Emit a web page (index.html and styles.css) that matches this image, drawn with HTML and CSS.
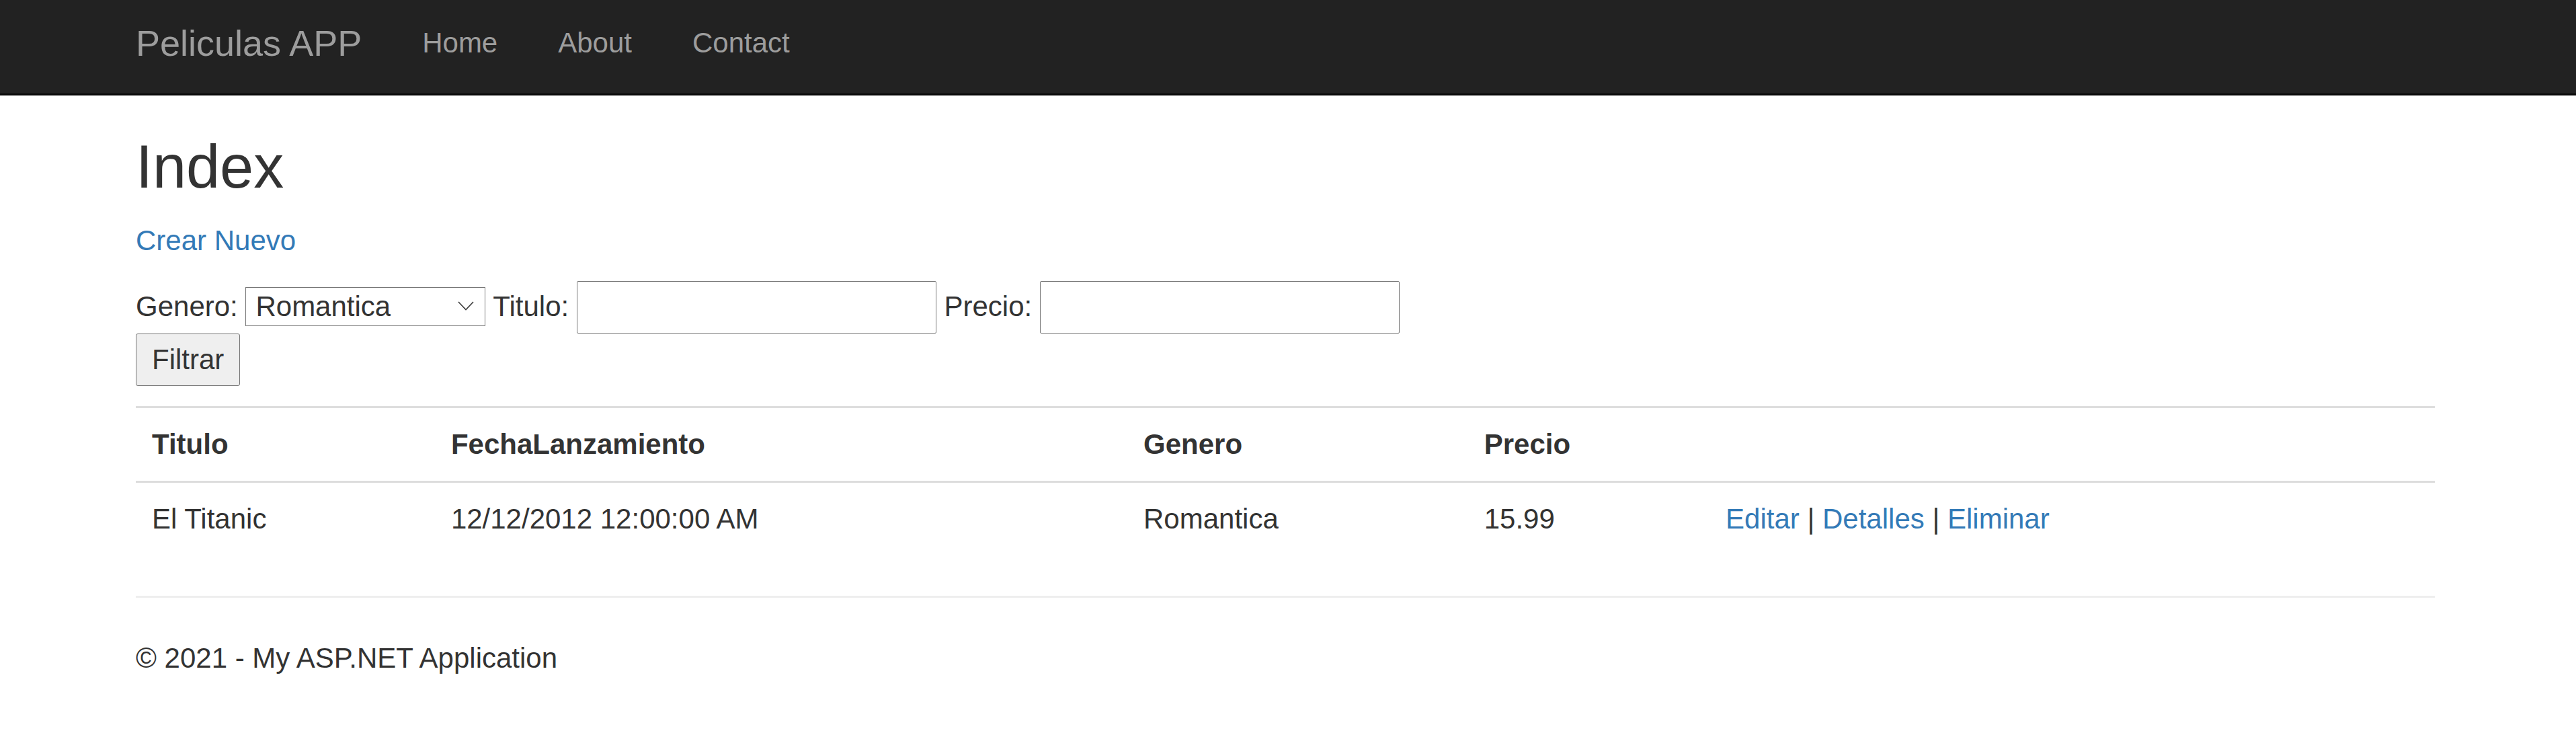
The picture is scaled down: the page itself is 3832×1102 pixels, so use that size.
FILE: index.html
```html
<!DOCTYPE html>
<html lang="es">
<head>
<meta charset="utf-8">
<title>Index - Peliculas APP</title>
<link rel="stylesheet" href="styles.css">
</head>
<body>
<header class="navbar">
  <div class="container nav-inner">
    <a class="brand" href="#">Peliculas APP</a>
    <ul class="nav">
      <li><a href="#">Home</a></li>
      <li><a href="#">About</a></li>
      <li><a href="#">Contact</a></li>
    </ul>
  </div>
</header>
<main class="container body-content">
  <h2 class="title">Index</h2>
  <p class="create"><a href="#">Crear Nuevo</a></p>
  <form class="filter">
    Genero: <span class="select-wrap"><select class="select"><option>Romantica</option><option>Accion</option><option>Comedia</option></select><svg class="chevron" width="24" height="14" viewBox="0 0 24 14"><path d="M1 1 L12 12.5 L23 1" fill="none" stroke="#3a3a3a" stroke-width="1.6"/></svg></span> Titulo: <input class="text-input" type="text"> Precio: <input class="text-input" type="text"><br>
    <button class="btn" type="submit">Filtrar</button>
  </form>
  <table class="table">
    <tbody>
      <tr>
        <th>Titulo</th>
        <th>FechaLanzamiento</th>
        <th>Genero</th>
        <th>Precio</th>
        <th></th>
      </tr>
      <tr>
        <td>El Titanic</td>
        <td>12/12/2012 12:00:00 AM</td>
        <td>Romantica</td>
        <td>15.99</td>
        <td><a href="#">Editar</a> | <a href="#">Detalles</a> | <a href="#">Eliminar</a></td>
      </tr>
    </tbody>
  </table>
  <hr class="rule">
  <footer class="footer">
    <p>© 2021 - My ASP.NET Application</p>
  </footer>
</main>
</body>
</html>
```
FILE: styles.css
```css
html, body {
  margin: 0;
  padding: 0;
  background: #fff;
}

body {
  font-family: "Liberation Sans", Arial, sans-serif;
  font-size: 42px;
  line-height: 60px;
  color: #333;
}

a {
  color: #337ab7;
  text-decoration: none;
}

.container {
  box-sizing: border-box;
  width: 3510px;
  padding: 0 45px;
  margin-left: 157px;
}

/* Navbar */
.navbar {
  height: 139px;
  background: #222;
  border-bottom: 3px solid #080808;
}

.nav-inner {
  display: flex;
  align-items: flex-start;
}

.brand {
  display: block;
  padding: 33.7px 45px 0 0;
  font-size: 54px;
  line-height: 60px;
  color: #9d9d9d;
}

.nav {
  display: flex;
  list-style: none;
  margin: 0;
  padding: 0;
}

.nav a {
  display: block;
  padding: 33.7px 45px 0;
  font-size: 42px;
  line-height: 60px;
  color: #9d9d9d;
}

/* Content */
.title {
  margin: 57px 0 30px;
  font-size: 90px;
  line-height: 99px;
  font-weight: 400;
  color: #333;
}

.create {
  margin: 0 0 30px;
}

.filter {
  margin: 0 0 30px;
}

.select-wrap {
  position: relative;
  display: inline-block;
}

.select {
  -webkit-appearance: none;
  appearance: none;
  box-sizing: border-box;
  width: 357px;
  height: 58px;
  margin: 0;
  padding: 0 0 0 14px;
  border: 1px solid #767676;
  border-radius: 0;
  background: #fff;
  font-family: "Liberation Sans", Arial, sans-serif;
  font-size: 42px;
  line-height: normal;
  color: #333;
  vertical-align: baseline;
}

.chevron {
  position: absolute;
  left: 316px;
  top: 22px;
  pointer-events: none;
}

.text-input {
  box-sizing: border-box;
  width: 535px;
  height: 78px;
  margin: 0;
  padding: 8px 8px 10px;
  border: 1px solid #767676;
  border-radius: 2px;
  background: #fff;
  font-family: "Liberation Sans", Arial, sans-serif;
  font-size: 42px;
  line-height: 60px;
  color: #333;
  vertical-align: baseline;
}

.btn {
  box-sizing: border-box;
  height: 78px;
  margin: 0;
  padding: 0 23px;
  border: 1px solid #767676;
  border-radius: 3px;
  background: #efefef;
  font-family: "Liberation Sans", Arial, sans-serif;
  font-size: 42px;
  line-height: 60px;
  color: #333;
  vertical-align: baseline;
}

/* Table */
.table {
  width: 100%;
  border-collapse: collapse;
  border-spacing: 0;
  margin: 0 0 60px;
}

.table th,
.table td {
  padding: 24px;
  line-height: 60px;
  text-align: left;
  vertical-align: top;
  border-top: 3px solid #ddd;
}

.table th {
  font-weight: 700;
}

/* Footer */
.rule {
  margin: 60px 0;
  height: 0;
  border: 0;
  border-top: 3px solid #eee;
}

.footer p {
  margin: 0 0 30px;
}
```
